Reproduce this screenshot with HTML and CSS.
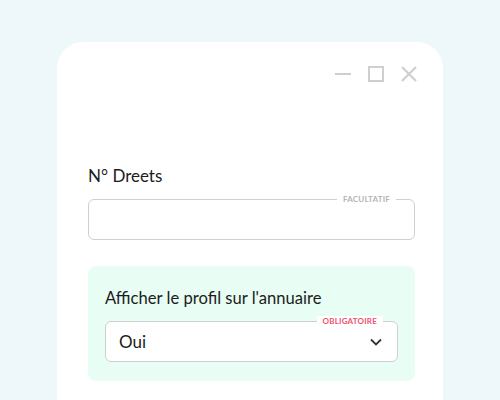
FILE: index.html
```html
<!DOCTYPE html>
<html lang="fr">
<head>
  <meta charset="UTF-8">
  <title>Profil</title>
  <link rel="stylesheet" href="styles.css">
</head>
<body>

<div class="window">
  <div class="window-bar">
    <svg class="ctrl" width="18" height="18" viewBox="0 0 18 18"><path d="M1 9h16" stroke="#cfcfcf" stroke-width="2"/></svg>
    <svg class="ctrl" width="18" height="18" viewBox="0 0 18 18"><rect x="2" y="2" width="14" height="14" fill="none" stroke="#cfcfcf" stroke-width="2"/></svg>
    <svg class="ctrl" width="18" height="18" viewBox="0 0 18 18"><path d="M2 2l14 14M16 2L2 16" stroke="#cfcfcf" stroke-width="2.2"/></svg>
  </div>

  <div class="form">
    <div class="field">
      <label class="field-label">N° Dreets</label>
      <div class="input">
        <span class="tag">FACULTATIF</span>
      </div>
    </div>

    <div class="field highlight">
      <label class="field-label">Afficher le profil sur l'annuaire</label>
      <div class="input select">
        <span class="tag required">OBLIGATOIRE</span>
        <span class="value">Oui</span>
        <svg width="14" height="14" viewBox="0 0 14 14"><path d="M2 4.5l5 5 5-5" fill="none" stroke="#333" stroke-width="1.8"/></svg>
      </div>
    </div>
  </div>
</div>

</body>
</html>
```

FILE: styles.css
```css
html, body {
  margin: 0;
  height: 100%;
  overflow: hidden;
}

body {
  background-color: #eef7f9;
  font-family: "Lato", "Noto Sans", sans-serif;
  color: #1c1c1c;
}

.window {
  background-color: #fff;
  margin: 42px 57px 0 57px;
  border-radius: 26px 26px 0 0;
  height: 358px;
  padding: 0 28px 0 31px;
}

.window-bar {
  display: flex;
  justify-content: flex-end;
  gap: 15px;
  padding-top: 23px;
  margin-right: -3px;
}

.form {
  padding-top: 82px;
}

.field-label {
  display: block;
  font-size: 17px;
  margin-bottom: 13px;
}

.highlight .field-label {
  font-size: 16.6px;
}

.input {
  position: relative;
  height: 39px;
  border: 1px solid #cfcfd3;
  border-radius: 6px;
  background-color: #fff;
}

.tag {
  position: absolute;
  top: -6px;
  right: 18px;
  padding: 0 6px;
  background-color: #fff;
  font-size: 8px;
  letter-spacing: 0.2px;
  color: #b5b5b5;
  line-height: 10px;
  font-weight: bold;
}

.tag.required {
  color: #f0506e;
  right: 14px;
}

.highlight {
  margin-top: 26px;
  background-color: #e8fdf3;
  border-radius: 8px;
  padding: 22px 17px 19px 17px;
}

.select {
  display: flex;
  align-items: center;
  justify-content: space-between;
  padding: 0 14px 0 13px;
}

.value {
  font-size: 17px;
}
```
